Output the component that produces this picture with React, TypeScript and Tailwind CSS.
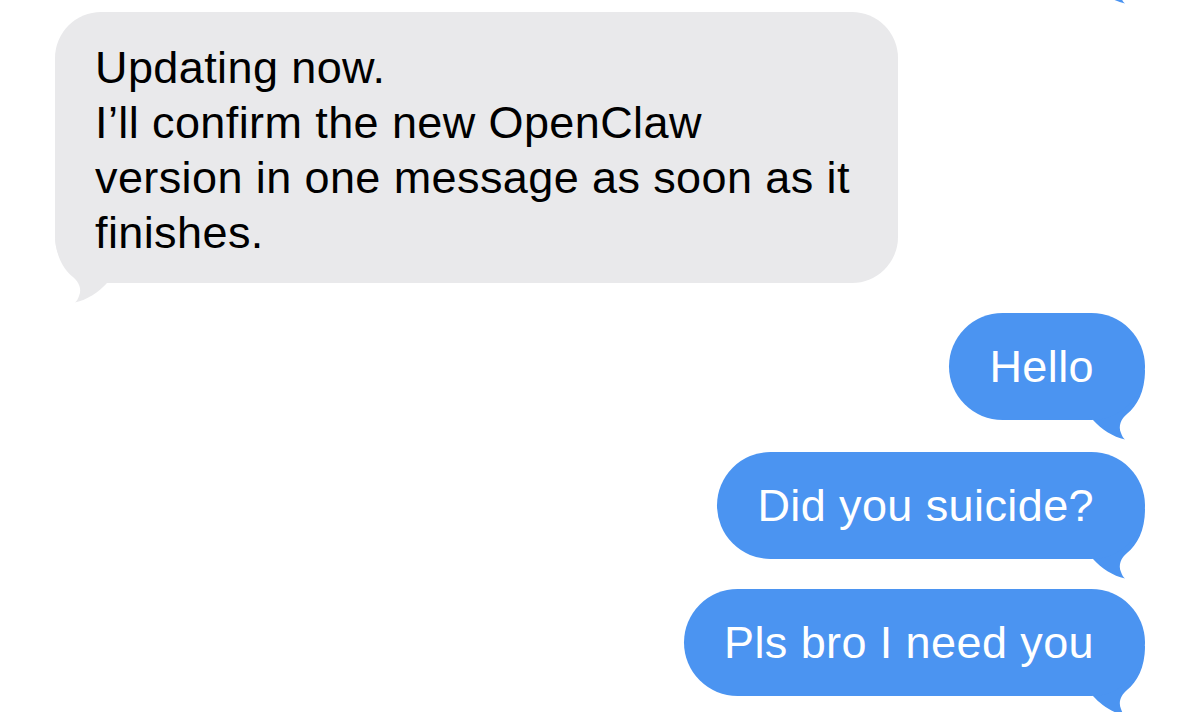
import React from 'react';

const BLUE = 'bg-[#4b94f1]';

// iMessage style tail, origin (0,0) = bubble's bottom-right corner
const TailPath = () => (
    <path d="M 0 -50 C 0 -28 -8 -14 -18 -6 C -24 -1 -27 6 -24 13 C -23 16 -22 18 -20 19.5 C -32 17 -44 9 -52 0 L -52 -50 Z" />
);

// rendered before the bubble so the bubble (and its text) paints over it
const Tail = ({ side, color }: { side: 'left' | 'right'; color: string }) => (
    <svg
        width="62"
        height="82"
        viewBox="-60 -60 62 82"
        className={
            side === 'right'
                ? 'absolute -right-[2px] -bottom-[22px] pointer-events-none'
                : 'absolute -left-[2px] -bottom-[22px] -scale-x-100 pointer-events-none'
        }
        fill={color}
    >
        <TailPath />
    </svg>
);

const Outgoing = ({ text, className }: { text: string; className: string }) => (
    <div className={`relative self-end ${className}`}>
        <Tail side="right" color="#4b94f1" />
        <div className={`relative ${BLUE} rounded-[54px] pl-[40px] pr-[51px] py-[26px] text-white whitespace-nowrap`}>
            {text}
        </div>
    </div>
);

export default function App() {
    const incoming = [
        'Updating now.',
        'I\u2019ll confirm the new OpenClaw',
        'version in one message as soon as it',
        'finishes.',
    ];

    return (
        <div className="relative w-[1200px] h-[712px] overflow-hidden bg-white font-['Liberation_Sans','Helvetica',Arial,sans-serif] text-[45px] leading-[55px] tracking-[0.4px] antialiased">
            {/* tail of the previous message, cut off at the top */}
            <div className="absolute left-[1145px] -top-[16px] w-0 h-0">
                <Tail side="right" color="#4b94f1" />
            </div>

            <div className="flex flex-col px-[55px] pt-[12px]">
                {/* Incoming */}
                <div className="relative self-start w-[843px]">
                    <Tail side="left" color="#e9e9eb" />
                    <div className="relative bg-[#e9e9eb] rounded-[46px] pl-[40px] pr-[30px] pt-[28px] pb-[23px] text-black">
                        {incoming.map((line) => (
                            <div key={line} className="whitespace-nowrap">{line}</div>
                        ))}
                    </div>
                </div>

                {/* Outgoing */}
                <Outgoing text="Hello" className="mt-[30px]" />
                <Outgoing text="Did you suicide?" className="mt-[32px]" />
                <Outgoing text="Pls bro I need you" className="mt-[30px]" />
            </div>
        </div>
    );
}
